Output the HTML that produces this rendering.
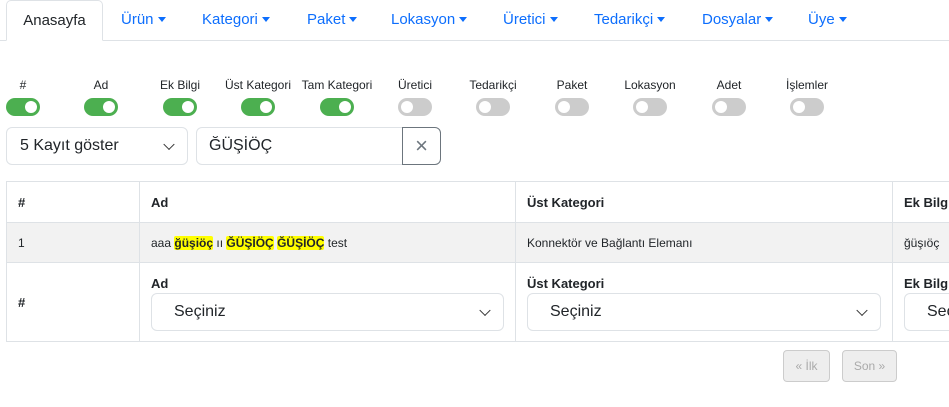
<!DOCTYPE html>
<html><head><meta charset="utf-8"><style>
*{box-sizing:border-box;margin:0;padding:0}
body{width:949px;height:407px;overflow:hidden;background:#fff;font-family:"Liberation Sans",sans-serif;color:#212529;position:relative}
.nav{position:absolute;left:0;top:0;width:949px;height:41px;border-bottom:1px solid #dee2e6}
.tab{position:absolute;top:0;height:41px;line-height:40px;font-size:15px;color:#0d6efd}
.tab.active{left:6px;width:97px;border:1px solid #dee2e6;border-bottom:1px solid #fff;border-radius:5px 5px 0 0;color:#212529;text-align:center;background:#fff}
.car{display:inline-block;width:0;height:0;border-left:4px solid transparent;border-right:4px solid transparent;border-top:5px solid #0d6efd;vertical-align:middle;margin-left:4px;margin-top:-2px}
.tg{position:absolute;top:78px;width:80px;text-align:center;font-size:12px;color:#212529}
.sw{display:block;margin:6px auto 0;width:34px;height:18px;border-radius:9px;background:#ccc;position:relative}
.sw::after{content:"";position:absolute;left:3px;top:3px;width:12px;height:12px;border-radius:50%;background:#fff}
.sw.on{background:#4caf50}.sw.on::after{left:19px}
.sel{position:absolute;border:1px solid #dee2e6;border-radius:6px;background:#fff;font-size:16px}
.chev{position:absolute;right:14px;top:50%;width:8px;height:8px;border-right:1.5px solid #333;border-bottom:1.5px solid #333;transform:translateY(-70%) rotate(45deg)}
table{position:absolute;left:6px;top:181px;border-collapse:collapse;font-size:12px;table-layout:fixed;width:1010px}
td,th{border:1px solid #dee2e6;padding:0 11px;text-align:left;vertical-align:middle;white-space:nowrap;overflow:hidden}
th{font-weight:bold;font-size:13px}
.hl{background:#ff0;font-weight:bold;border-radius:2px}
.btn{position:absolute;top:350px;height:32px;border:1px solid #ccc;border-radius:4px;background:#eee;color:#aaa;font-size:12px;text-align:center;line-height:30px}
.fs{position:relative;margin-top:2px;height:38px;border:1px solid #dee2e6;border-radius:6px;font-weight:normal;font-size:16px;line-height:36px;padding-left:22px}
</style></head><body>
<div class="nav">
<div class="tab active">Anasayfa</div>
<div class="tab" style="left:121px">Ürün<span class="car"></span></div>
<div class="tab" style="left:202px">Kategori<span class="car"></span></div>
<div class="tab" style="left:307px">Paket<span class="car"></span></div>
<div class="tab" style="left:391px">Lokasyon<span class="car"></span></div>
<div class="tab" style="left:503px">Üretici<span class="car"></span></div>
<div class="tab" style="left:594px">Tedarikçi<span class="car"></span></div>
<div class="tab" style="left:702px">Dosyalar<span class="car"></span></div>
<div class="tab" style="left:808px">Üye<span class="car"></span></div>
</div>
<div class="tg" style="left:-17px">#<span class="sw on"></span></div>
<div class="tg" style="left:61px">Ad<span class="sw on"></span></div>
<div class="tg" style="left:140px">Ek Bilgi<span class="sw on"></span></div>
<div class="tg" style="left:218px">Üst Kategori<span class="sw on"></span></div>
<div class="tg" style="left:297px">Tam Kategori<span class="sw on"></span></div>
<div class="tg" style="left:375px">Üretici<span class="sw"></span></div>
<div class="tg" style="left:453px">Tedarikçi<span class="sw"></span></div>
<div class="tg" style="left:532px">Paket<span class="sw"></span></div>
<div class="tg" style="left:610px">Lokasyon<span class="sw"></span></div>
<div class="tg" style="left:689px">Adet<span class="sw"></span></div>
<div class="tg" style="left:767px">İşlemler<span class="sw"></span></div>

<div class="sel" style="left:6px;top:127px;width:182px;height:38px;line-height:36px;padding-left:13px">5 Kayıt göster<span class="chev"></span></div>
<div class="sel" style="left:196px;top:127px;width:207px;height:38px;line-height:36px;padding-left:12px;border-radius:6px 0 0 6px">ĞÜŞİÖÇ</div>
<div style="position:absolute;left:402px;top:127px;width:39px;height:38px;border:1px solid #6c757d;border-radius:0 6px 6px 0;color:#6c757d;font-size:22px;text-align:center;line-height:35px">×</div>

<table>
<colgroup><col style="width:133px"><col style="width:376px"><col style="width:377px"><col style="width:124px"></colgroup>
<tr style="height:41px"><th>#</th><th>Ad</th><th>Üst Kategori</th><th>Ek Bilgi</th></tr>
<tr style="height:40px;background:#f2f2f2"><td>1</td><td>aaa <span class="hl">ğüşiöç</span> ıı <span class="hl">ĞÜŞİÖÇ</span> <span class="hl">ĞÜŞİÖÇ</span> test</td><td>Konnektör ve Bağlantı Elemanı</td><td>ğüşıöç</td></tr>
<tr style="height:79px"><th>#</th>
<th><div style="margin-top:2px">Ad</div><div class="fs">Seçiniz<span class="chev"></span></div></th>
<th><div style="margin-top:2px">Üst Kategori</div><div class="fs">Seçiniz<span class="chev"></span></div></th>
<th><div style="margin-top:2px">Ek Bilgi</div><div class="fs" style="width:130px">Seçiniz</div></th></tr>
</table>
<div class="btn" style="left:783px;width:47px">« İlk</div>
<div class="btn" style="left:842px;width:55px">Son »</div>
</body></html>
